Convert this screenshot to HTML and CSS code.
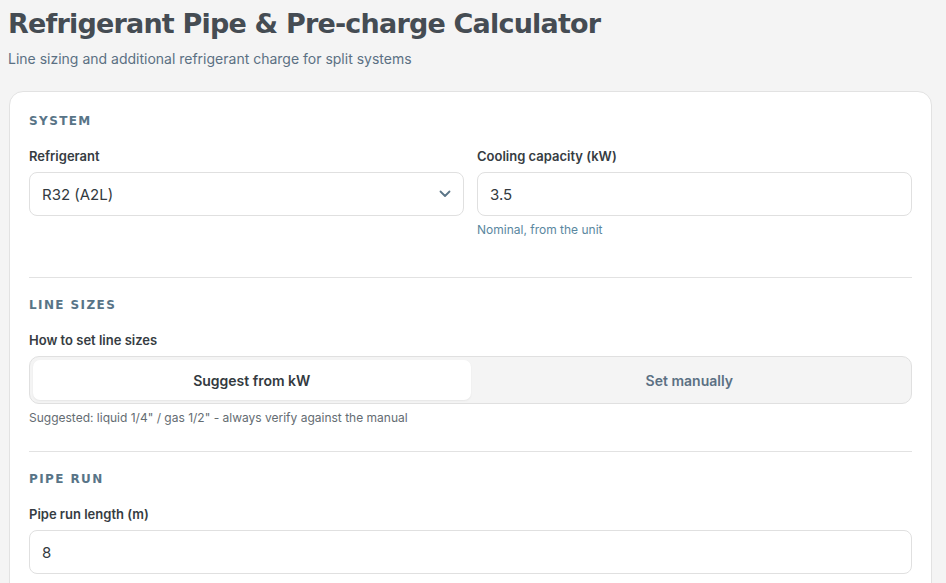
FILE: index.html
```html
<!DOCTYPE html>
<html lang="en">
<head>
  <meta charset="UTF-8">
  <meta name="viewport" content="width=device-width, initial-scale=1.0">
  <title>Refrigerant Pipe &amp; Pre-charge Calculator</title>
  <link rel="stylesheet" href="styles.css">
</head>
<body>
  <header class="page-head">
    <h1>Refrigerant Pipe &amp; Pre-charge Calculator</h1>
    <p class="subtitle">Line sizing and additional refrigerant charge for split systems</p>
  </header>

  <main class="card">
    <section class="section">
      <h2>System</h2>
      <div class="grid-2">
        <div class="field">
          <label for="refrigerant">Refrigerant</label>
          <div class="select-wrap">
            <select id="refrigerant">
              <option>R32 (A2L)</option>
              <option>R410A</option>
            </select>
            <svg class="chevron" width="12" height="8" viewBox="0 0 12 8"><path d="M1.5 1.5 6 6l4.5-4.5" fill="none" stroke="#5b7587" stroke-width="1.8" stroke-linecap="round" stroke-linejoin="round"/></svg>
          </div>
        </div>
        <div class="field">
          <label for="capacity">Cooling capacity (kW)</label>
          <input id="capacity" type="text" value="3.5">
          <span class="hint hint-blue">Nominal, from the unit</span>
        </div>
      </div>
    </section>

    <section class="section">
      <h2>Line sizes</h2>
      <div class="field">
        <label>How to set line sizes</label>
        <div class="segmented">
          <button class="seg active">Suggest from kW</button>
          <button class="seg">Set manually</button>
        </div>
        <span class="hint">Suggested: liquid 1/4" / gas 1/2" - always verify against the manual</span>
      </div>
    </section>

    <section class="section">
      <h2>Pipe run</h2>
      <div class="field">
        <label for="length">Pipe run length (m)</label>
        <input id="length" type="text" value="8">
      </div>
    </section>
  </main>
</body>
</html>
```

FILE: styles.css
```css
* {
  box-sizing: border-box;
}

body {
  margin: 0;
  padding: 0 14px 0 9px;
  background: #f4f4f4;
  font-family: Inter, 'Noto Sans', sans-serif;
  color: #333a40;
}

.page-head {
  padding-top: 6px;
}

.page-head h1 {
  margin: 0 0 0 -1px;
  font-family: 'DejaVu Sans', sans-serif;
  font-weight: 700;
  font-size: 27px;
  letter-spacing: -0.8px;
  line-height: 36px;
  color: #454c53;
}

.subtitle {
  margin: 8px 0 0 -1px;
  font-size: 14px;
  color: #5b7083;
}

.card {
  margin-top: 24px;
  background: #fff;
  border: 1px solid #e2e2e2;
  border-radius: 14px;
  padding: 0 19px;
}

.section {
  padding: 20px 0 26px;
  border-bottom: 1px solid #e2e2e2;
}

.section:first-child {
  padding-top: 22px;
}

.section:last-child {
  border-bottom: none;
}

.section h2 {
  margin: 0 0 20px;
  font-family: 'DejaVu Sans', sans-serif;
  font-weight: 700;
  font-size: 12px;
  letter-spacing: 1.4px;
  text-transform: uppercase;
  color: #587487;
}

.grid-2 {
  display: grid;
  grid-template-columns: 1fr 1fr;
  gap: 13px;
  margin-bottom: 14px;
}

.field {
  display: flex;
  flex-direction: column;
}

.field label {
  font-size: 13px;
  font-weight: 600;
  color: #363c42;
  margin-bottom: 8px;
}

.select-wrap {
  position: relative;
}

select,
input {
  width: 100%;
  height: 44px;
  border: 1px solid #e0e0e0;
  border-radius: 8px;
  background: #fff;
  font-family: inherit;
  font-size: 15px;
  color: #333a40;
  padding: 0 12px;
  appearance: none;
  outline: none;
}

.chevron {
  position: absolute;
  right: 13px;
  top: 18px;
  pointer-events: none;
}

.hint {
  margin-top: 6px;
  font-size: 12px;
  color: #646c72;
}

.hint-blue {
  color: #5a87a0;
}

.segmented {
  display: flex;
  height: 48px;
  padding: 3px;
  background: #f4f4f4;
  border: 1px solid #e0e0e0;
  border-radius: 10px;
}

.seg {
  flex: 1;
  border: none;
  background: transparent;
  border-radius: 7px;
  font-family: inherit;
  font-size: 14px;
  font-weight: 600;
  color: #5b7083;
}

.seg.active {
  background: #fff;
  color: #333a40;
  box-shadow: 0 1px 2px rgba(0, 0, 0, 0.06);
}
```
